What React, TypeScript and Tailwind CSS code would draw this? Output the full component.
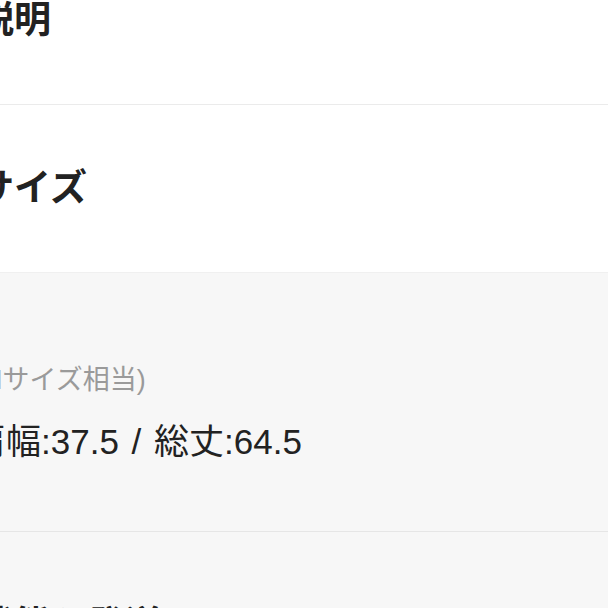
export default function App() {
  return (
    <div className="h-[608px] w-[608px] overflow-hidden bg-[#f7f7f7] text-[#333] font-['Liberation_Sans','Noto_Sans_CJK_JP',sans-serif]">
      {/* description */}
      <section className="bg-white border-b border-[#ebebeb] pt-[2px] pb-[65px]">
        <h2 className="-ml-[134px] text-[37px] leading-none font-bold text-[#222] whitespace-nowrap">商品の説明</h2>
      </section>

      {/* size */}
      <section className="bg-white pt-[65px] pb-[65px]">
        <h2 className="-ml-[134px] text-[37px] leading-none font-bold text-[#222] whitespace-nowrap">商品のサイズ</h2>
      </section>

      <section className="border-t border-[#f0f0f0] pt-[94px] pb-[72px]">
        <p className="-ml-[29px] text-[27px] leading-none text-[#9a9a9a] whitespace-nowrap">(Mサイズ相当)</p>
        <p className="-ml-[29px] mt-[30px] text-[35px] leading-none text-[#222] whitespace-nowrap [word-spacing:3px]">肩幅:37.5 / 総丈:64.5</p>
      </section>

      {/* condition */}
      <section className="border-t border-[#e6e6e6] pt-[75px]">
        <h2 className="-ml-[134px] text-[37px] leading-none font-bold text-[#222] whitespace-nowrap">商品の状態と発送</h2>
      </section>
    </div>
  );
}
